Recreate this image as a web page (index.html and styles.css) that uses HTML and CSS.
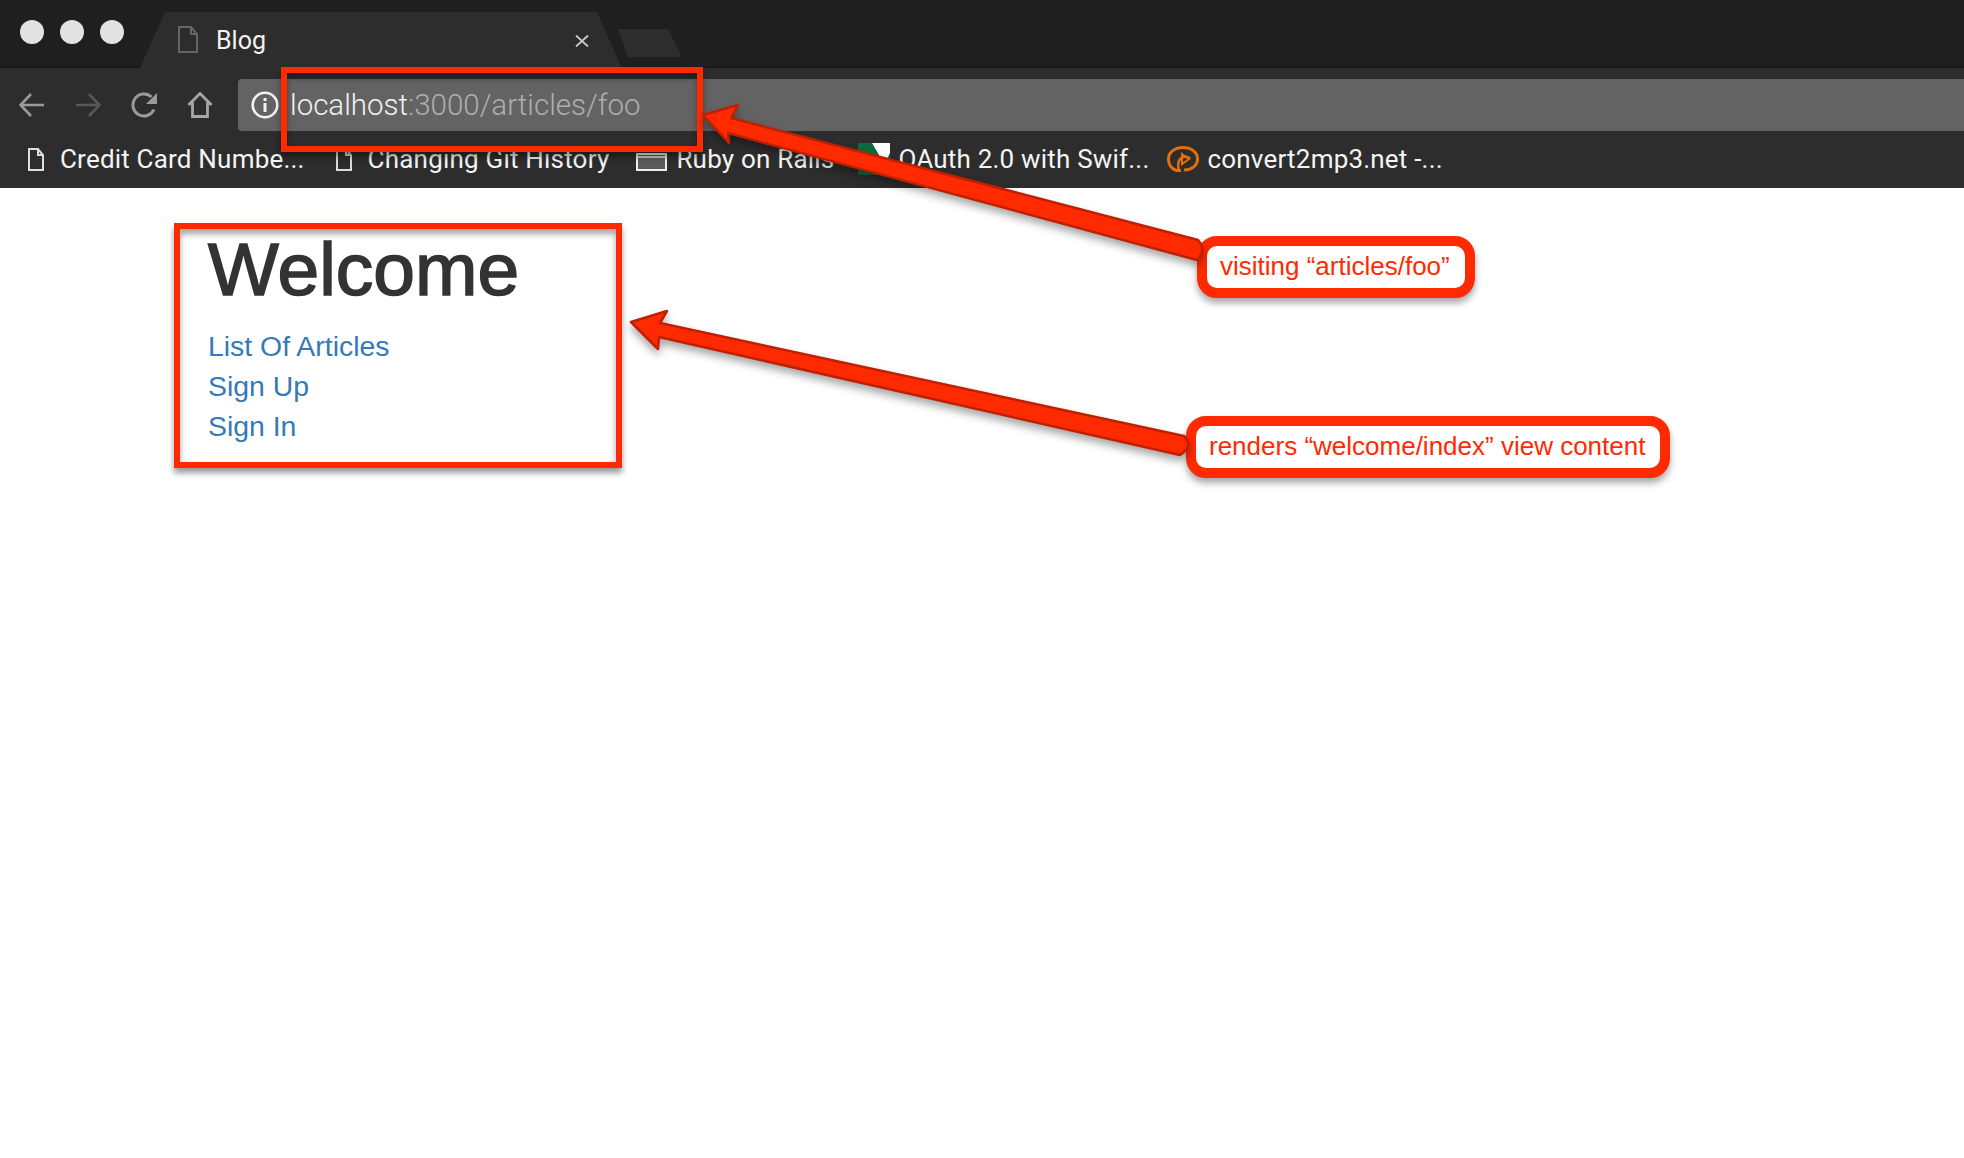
FILE: index.html
```html
<!DOCTYPE html>
<html lang="en">
<head>
    <meta charset="UTF-8">
    <title>Blog</title>
    <link rel="stylesheet" href="styles.css">
</head>
<body>
    <header class="browser">
        <div class="tabstrip">
            <div class="lights"><i></i><i></i><i></i></div>
            <div class="tab">
                <svg class="tab-doc" viewBox="0 0 20 27"><path d="M1 1h12l6 7v18H1zM13 1v7h6" fill="none" stroke="#666" stroke-width="2"/></svg>
                <span class="tab-title">Blog</span>
                <svg class="tab-close" viewBox="0 0 14 12"><path d="M1 .5l12 11M13 .5L1 11.500" fill="none" stroke="#ccc" stroke-width="1.800"/></svg>
            </div>
            <div class="newtab"></div>
        </div>

        <div class="toolbar">
            <svg class="nav-icon" viewBox="0 0 26 24"><path d="M25 12H2M12 1L1.500 12 12 23" fill="none" stroke="#9a9a9a" stroke-width="2.600"/></svg>
            <svg class="nav-icon" viewBox="0 0 26 24"><path d="M1 12h23M14 1l10.500 11L14 23" fill="none" stroke="#585858" stroke-width="2.600"/></svg>
            <svg class="nav-icon" viewBox="0 0 26 26"><path d="M23 17.500A11 11 0 1 1 20.500 5" fill="none" stroke="#9a9a9a" stroke-width="3"/><path d="M26 1v11H15z" fill="#9a9a9a"/></svg>
            <svg class="nav-icon" viewBox="0 0 26 26"><path d="M1.500 13L13 1.500 24.500 13M5.500 10v14.500h15V10" fill="none" stroke="#a6a6a6" stroke-width="2.800"/></svg>
            <div class="omnibox">
                <svg class="info" viewBox="0 0 28 28"><circle cx="14" cy="14" r="12.300" fill="none" stroke="#f2f2f2" stroke-width="2.600"/><rect x="12.500" y="12" width="3" height="9" fill="#f2f2f2"/><rect x="12.500" y="7" width="3" height="3" fill="#f2f2f2"/></svg>
                <span class="url"><span class="url-host">localhost</span>:3000/articles/foo</span>
            </div>
        </div>

        <nav class="bookmarks">
            <a class="bookmark bm-card">
                <svg class="bm-doc" viewBox="0 0 16 23"><path d="M1 1h9l5 6v15H1zM10 1v6h5" fill="none" stroke="#ddd" stroke-width="2"/></svg>
                Credit Card Numbe...
            </a>
            <a class="bookmark bm-git">
                <svg class="bm-doc" viewBox="0 0 16 23"><path d="M1 1h9l5 6v15H1zM10 1v6h5" fill="none" stroke="#ddd" stroke-width="2"/></svg>
                Changing Git History
            </a>
            <a class="bookmark bm-rails">
                <svg class="bm-folder" viewBox="0 0 31 18"><rect x="1" y="1" width="29" height="16" fill="#5c5c5c" stroke="#eee" stroke-width="2"/><path d="M1 4h29" stroke="#eee" stroke-width="1.500"/></svg>
                Ruby on Rails
            </a>
            <a class="bookmark bm-oauth">
                <svg class="bm-fav" viewBox="0 0 32 32"><rect width="32" height="32" fill="#0b6b3c"/><path d="M14 0h18v10L24 26 21 12z" fill="#fff"/></svg>
                OAuth 2.0 with Swif...
            </a>
            <a class="bookmark bm-mp3">
                <svg class="bm-orange" viewBox="0 0 32 26"><path d="M14 25C6 25 1.500 20 1.500 13S8 1.500 16 1.500 30.500 6 30.500 13 24 24 17 24" fill="none" stroke="#e56f06" stroke-width="3"/><path d="M14 25c-3 0-4-8-1-12 3-3 8-3 10 0" fill="none" stroke="#e56f06" stroke-width="2.500"/><path d="M15 8l7 5-7 5z" fill="none" stroke="#e56f06" stroke-width="2"/></svg>
                convert2mp3.net -...
            </a>
        </nav>
    </header>

    <main class="page">
        <h1>Welcome</h1>
        <ul class="links">
            <li><a href="#">List Of Articles</a></li>
            <li><a href="#">Sign Up</a></li>
            <li><a href="#">Sign In</a></li>
        </ul>
    </main>

    <!-- annotations drawn on top of the screenshot -->
    <div class="mark mark-url"></div>
    <div class="mark mark-page"></div>
    <div class="callout callout-url">visiting “articles/foo”</div>
    <div class="callout callout-page">renders “welcome/index” view content</div>
    <svg class="arrows" viewBox="0 0 1964 1158">
        <path d="M703 115L738 105 731 118 1198 240Q1207 250 1197 260L728 133 729 143Z"/>
        <path d="M631 322L667 311 660 323 1184 436Q1194 446 1180 455L659 337 658 349Z"/>
    </svg>
</body>
</html>
```

FILE: styles.css
```css
html, body {
    margin: 0;
    height: 100%;
    overflow: hidden;
    background: #fff;
}
body {
    font-family: "Liberation Sans", Arial, sans-serif;
}

/* browser chrome */
.browser {
    font-family: Roboto, "Liberation Sans", sans-serif;
}
.tabstrip {
    display: flex;
    height: 68px;
    background: #1f1f1f;
    border-bottom: 1px solid #151515;
    box-sizing: border-box;
    padding-left: 20px;
}
.lights {
    display: flex;
    gap: 16px;
    padding-top: 20px;
    width: 120px;
}
.lights i {
    width: 24px;
    height: 24px;
    border-radius: 50%;
    background: #e2e2e2;
}
.tab {
    position: relative;
    display: flex;
    align-items: center;
    width: 482px;
    margin: 12px 0 -1px;
    padding: 0 33px 0 38px;
    box-sizing: border-box;
    background: #2d2d2d;
    clip-path: polygon(0 100%, 25px 0, 457px 0, 100% 100%);
}
.tab-doc {
    width: 20px;
    height: 27px;
    margin-top: -1px;
}
.tab-title {
    margin-left: 18px;
    flex: 1;
    color: #f2f2f2;
    font-size: 25px;
}
.tab-close {
    width: 14px;
    height: 12px;
    margin-top: 2px;
}
.newtab {
    width: 64px;
    height: 28px;
    margin: 29px 0 0 -4px;
    background: #2d2d2d;
    clip-path: polygon(0 0, 50px 0, 100% 100%, 10px 100%);
}
.toolbar {
    display: flex;
    align-items: center;
    gap: 30px;
    height: 74px;
    padding: 0 0 0 19px;
    background: #2d2d2d;
}
.nav-icon {
    width: 26px;
    height: 26px;
    flex: none;
}
.omnibox {
    display: flex;
    align-items: center;
    flex: 1;
    height: 52px;
    margin: 0 0 0 -5px;
    padding-left: 13px;
    background: #636363;
    border-radius: 4px 0 0 4px;
}
.info {
    width: 28px;
    height: 28px;
}
.url {
    margin-left: 11px;
    color: #aeaeae;
    font-size: 29.500px;
    font-weight: 300;
}
.url-host {
    color: #f2f2f2;
}
.bookmarks {
    display: flex;
    align-items: center;
    height: 46px;
    padding: 0 0 12px 28px;
    box-sizing: border-box;
    background: #2d2d2d;
}
.bookmark {
    display: flex;
    align-items: center;
    color: #f4f4f4;
    font-size: 26px;
    letter-spacing: .2px;
    white-space: nowrap;
}
.bm-doc {
    width: 16px;
    height: 23px;
    margin-right: 16px;
}
.bm-folder {
    width: 31px;
    height: 18px;
    margin: 6px 9px 0 0;
}
.bm-fav {
    width: 32px;
    height: 32px;
    margin-right: 8px;
}
.bm-orange {
    width: 32px;
    height: 26px;
    margin-right: 8px;
}
.bm-git { margin-left: 31px; }
.bm-rails { margin-left: 27px; }
.bm-oauth { margin-left: 24px; }
.bm-mp3 { margin-left: 18px; }

/* page content */
.page {
    padding: 45px 0 0 208px;
    color: #333;
}
.page h1 {
    margin: 0 0 21px;
    font-size: 75px;
    font-weight: 400;
    line-height: 72px;
    -webkit-text-stroke: 1.600px #333;
}
.links {
    list-style: none;
    margin: 0;
    padding: 0;
    font-size: 28.400px;
    line-height: 40px;
}
.links a {
    color: #337ab7;
    text-decoration: none;
}

/* annotations */
.mark {
    position: absolute;
    box-sizing: border-box;
    border: 6px solid #ff2a00;
    box-shadow: 0 5px 6px rgba(0, 0, 0, .4), inset 0 5px 6px rgba(0, 0, 0, .35);
}
.mark-url {
    left: 281px;
    top: 67px;
    width: 422px;
    height: 85px;
}
.mark-page {
    left: 174px;
    top: 223px;
    width: 448px;
    height: 245px;
}
.callout {
    position: absolute;
    box-sizing: border-box;
    height: 62px;
    padding-left: 13px;
    border: 10px solid #ff2a00;
    border-radius: 20px;
    background: #fff;
    color: #ff2a00;
    font-size: 26px;
    line-height: 40px;
    white-space: nowrap;
    box-shadow: 0 5px 7px rgba(0, 0, 0, .35);
}
.callout-url {
    left: 1197px;
    top: 236px;
    width: 278px;
}
.callout-page {
    left: 1186px;
    top: 416px;
    width: 484px;
}
.arrows {
    position: absolute;
    left: 0;
    top: 0;
    width: 1964px;
    height: 1158px;
    filter: drop-shadow(0 5px 4px rgba(0, 0, 0, .35));
}
.arrows path {
    fill: #ff2a00;
    stroke: #c01f00;
    stroke-width: 2.500;
    stroke-linejoin: round;
}
```
